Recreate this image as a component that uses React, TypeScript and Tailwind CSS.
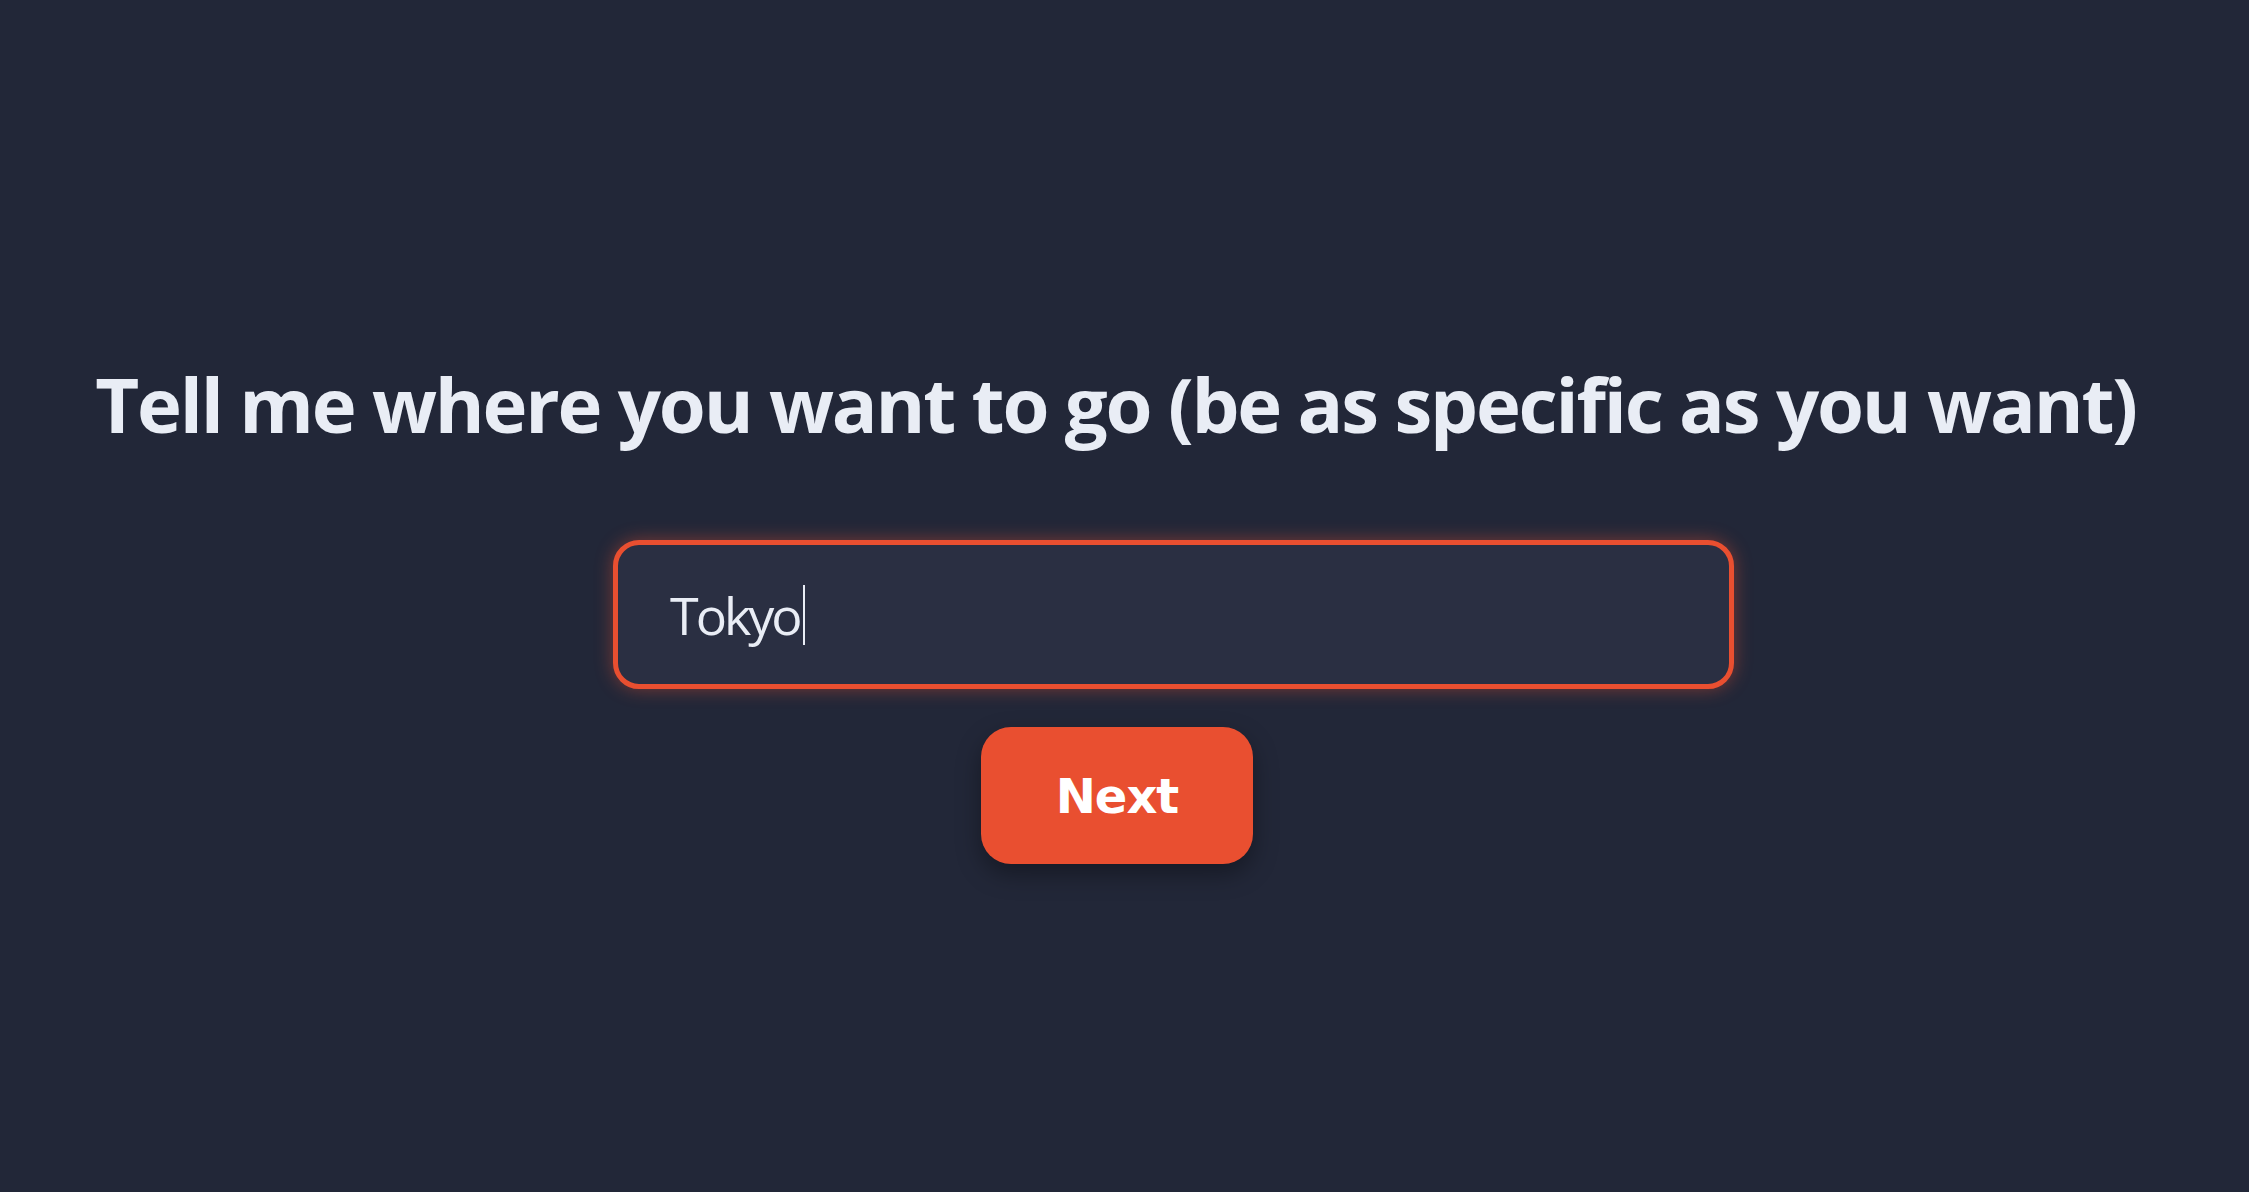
import React from "react";

export default function App() {
  return (
    <div className="min-h-screen w-full bg-[#222738] flex flex-col items-center pt-[366px]" style={{ fontFamily: '"Open Sans", "Noto Sans", sans-serif' }}>
      <h1 className="text-[76px] leading-none font-bold text-[#e9edf5] mr-[18px] whitespace-nowrap tracking-[-2.2px]">
        Tell me where you want to go (be as specific as you want)
      </h1>
      <div className="mt-[98px] ml-[98px] w-[1121px] h-[149px] rounded-[26px] border-[5px] border-[#e94f30] bg-[#2a2f42] shadow-[0_0_18px_rgba(233,79,48,0.45)] flex items-center pl-[52px]">
        <span className="text-[52px] leading-none text-[#e9edf5] tracking-[-3px]">Tokyo</span>
        <span className="ml-[3px] w-[2px] h-[60px] bg-[#e9edf5]" />
      </div>
      <button className="mt-[38px] mr-[15px] w-[272px] h-[137px] rounded-[30px] bg-[#e94f30] text-white font-bold text-[48px] tracking-[-1px] shadow-[0_10px_24px_rgba(0,0,0,0.35)]" style={{ fontFamily: '"DejaVu Sans", Verdana, sans-serif' }}>
        Next
      </button>
    </div>
  );
}
